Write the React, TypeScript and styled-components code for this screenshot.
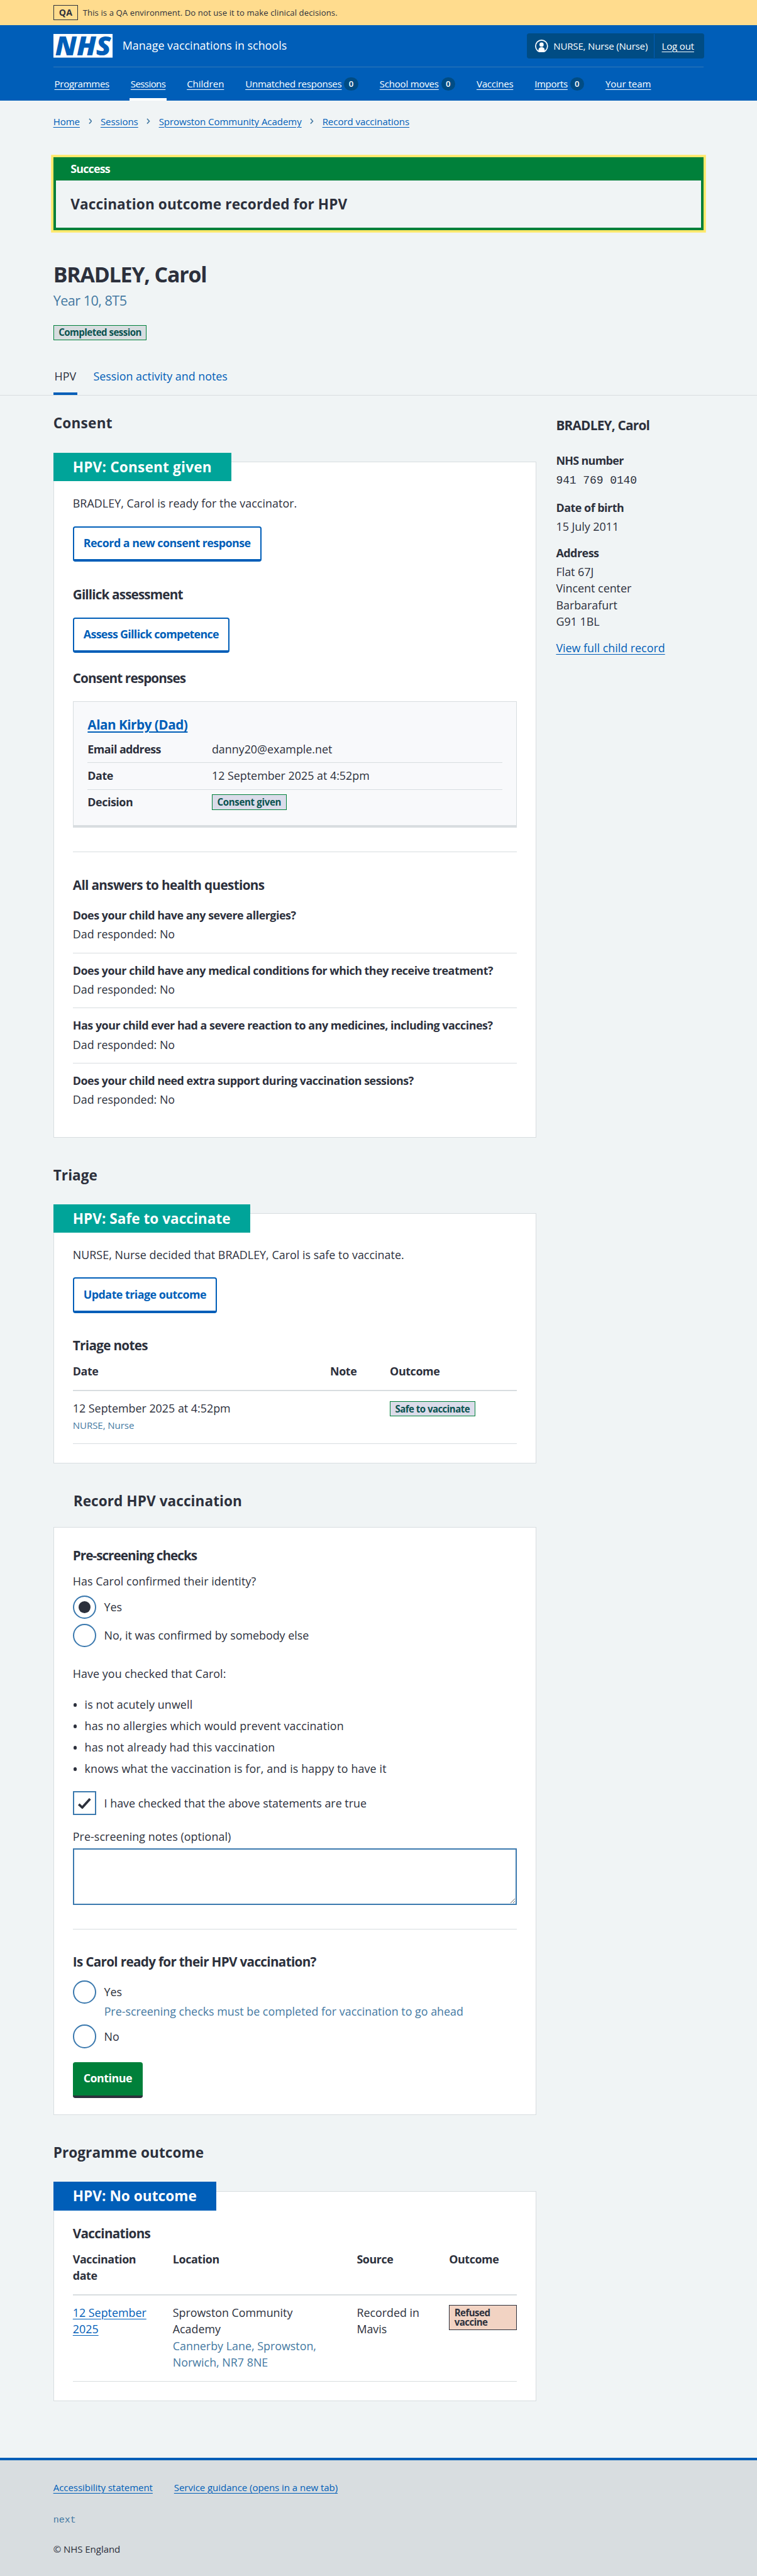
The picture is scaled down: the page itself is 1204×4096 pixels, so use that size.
import type { ReactNode } from "react";
import styled, { createGlobalStyle } from "styled-components";

const c = {
  text: "#2c303c",
  secondary: "#4479a2",
  input: "#3b79ae",
  blue: "#005eb8",
  darkBlue: "#004c84",
  green: "#00803a",
  teal: "#00a499",
  page: "#f0f4f5",
  border: "#d8dde0",
  yellow: "#ffe86b",
};

/* Stroke widths that stay whole device pixels at the page's zoom level */
const stroke = { medium: "2.15px", thick: "4.27px" };

const GlobalStyle = createGlobalStyle`
  *, *::before, *::after { box-sizing: border-box; }
  html { background: ${c.border}; }
  body {
    margin: 0;
    background: ${c.page};
    color: ${c.text};
    font-family: "Open Sans", "Noto Sans", Arial, sans-serif;
    font-size: 19px;
    line-height: 28px;
  }
  h1, h2, h3, h4, p, ul, dl, dd, dt { margin: 0; padding: 0; font-size: inherit; }
`;

const Page = styled.div`
  zoom: 0.9409;
  display: flex;
  flex-direction: column;
  min-height: 4353px;
`;

/* Environment banner */
const EnvBar = styled.div`
  display: flex;
  align-items: center;
  gap: 8px;
  height: 42px;
  padding: 0 90px;
  background: #ffdc8e;
  font-size: 14px;
  line-height: 24px;
  letter-spacing: 0.006em;
`;
const EnvTag = styled.strong`
  width: 42px;
  height: 26px;
  border: 1px solid ${c.text};
  text-align: center;
  font-size: 15px;
`;
const EnvText = styled.span`
  padding-top: 1px;
`;

/* Header */
const Header = styled.header`
  height: 128px;
  padding: 0 90px;
  background: ${c.blue};
  color: #fff;
  font-size: 16px;
  letter-spacing: -0.012em;
`;
const HeaderTop = styled.div`
  display: flex;
  align-items: center;
  height: 72px;
  border-bottom: 1px solid #3379b8;
`;
const Logo = styled.svg`
  display: block;
  width: 100px;
  height: 40px;
  overflow: visible;
`;
const ServiceName = styled.span`
  flex: 1;
  padding: 0 0 2px 17px;
  font-size: 19px;
  letter-spacing: 0.001em;
`;
const Account = styled.div`
  display: flex;
  width: 300px;
  height: 42px;
  margin-right: -1px;
  border-radius: 4px;
  background: ${c.darkBlue};
`;
const AccountItem = styled.div<{ $last?: boolean }>`
  display: flex;
  align-items: center;
  flex: ${(p) => (p.$last ? 1 : "0 0 216px")};
  gap: 9px;
  height: 40px;
  margin: 1px 0;
  padding-left: ${(p) => (p.$last ? 12 : 14)}px;
  border-right: ${(p) => (p.$last ? 0 : 1)}px solid ${c.blue};
  white-space: nowrap;
`;
const Nav = styled.nav`
  display: flex;
  gap: 32px;
  height: 56px;
`;
const NavItem = styled.div<{ $active?: boolean; $ls?: number }>`
  display: flex;
  align-items: center;
  gap: 4px;
  padding: 4px 2px 0;
  border-bottom: ${stroke.thick} solid ${(p) => (p.$active ? "#fff" : "transparent")};
  letter-spacing: ${(p) => p.$ls ?? 0}em;
  white-space: nowrap;
`;
const Badge = styled.span`
  width: 24px;
  height: 22px;
  border-radius: 12px;
  background: ${c.darkBlue};
  font-size: 14px;
  font-weight: 600;
  line-height: 22px;
  text-align: center;
  letter-spacing: 0;
`;

const Link = styled.a<{ $light?: boolean }>`
  color: ${(p) => (p.$light ? "#fff" : c.blue)};
  text-decoration: underline;
  text-decoration-thickness: 1.1px;
  text-underline-offset: 3px;
`;

const Container = styled.div`
  padding: 0 90px;
`;

const Breadcrumb = styled.nav`
  display: flex;
  align-items: center;
  margin-top: 23px;
  gap: 14.5px;
  font-size: 16px;
  line-height: 24px;
  letter-spacing: -0.004em;
`;

/* Success banner */
const Banner = styled.section`
  height: 123px;
  margin-top: 49px;
  border: ${stroke.thick} solid ${c.green};
  border-top: 0;
  box-shadow: 0 0 0 4px ${c.yellow};
`;
const BannerTitle = styled.div`
  height: 39px;
  padding-left: 25px;
  background: ${c.green};
  color: #fff;
  font-weight: 700;
  line-height: 39px;
  letter-spacing: -0.045em;
`;
const BannerText = styled.p`
  padding-left: 25px;
  font-size: 24px;
  font-weight: 700;
  line-height: 80px;
  letter-spacing: 0.005em;
`;

const Title = styled.h1`
  margin-top: 53px;
  font-size: 36px;
  line-height: 44px;
  letter-spacing: -0.034em;
`;
const Caption = styled.p`
  margin: 6px 0 25px;
  color: ${c.secondary};
  font-size: 23px;
  line-height: 32px;
  letter-spacing: -0.025em;
`;

const Tag = styled.strong<{ $bg: string; $fg?: string; $ls?: number }>`
  display: block;
  width: fit-content;
  padding: 4px 8px;
  border: 1px solid ${(p) => p.$fg ?? c.green};
  background: ${(p) => p.$bg};
  color: ${(p) => p.$fg ?? "#0b5250"};
  font-size: 16px;
  line-height: 16px;
  letter-spacing: ${(p) => p.$ls ?? -0.035}em;
`;

const Tabs = styled.div`
  display: flex;
  gap: 25px;
  margin-top: 47px;
  padding: 0 90px;
  border-bottom: 1px solid ${c.border};
`;
const Tab = styled.a<{ $active?: boolean }>`
  padding: 0 2px 13px;
  border-bottom: ${stroke.thick} solid ${(p) => (p.$active ? c.blue : "transparent")};
  color: ${(p) => (p.$active ? c.text : c.blue)};
`;

const Columns = styled.div`
  display: flex;
  gap: 33px;
  padding: 0 90px;
`;
const MainColumn = styled.main`
  width: 817px;
`;
const Aside = styled.aside`
  flex: 1;
  padding-top: 34px;
`;

const SectionTitle = styled.h2<{ $top?: number; $indent?: number; $ls?: number }>`
  margin-top: ${(p) => p.$top ?? 47.7}px;
  padding-left: ${(p) => p.$indent ?? 0}px;
  font-size: 24px;
  line-height: 32px;
  letter-spacing: ${(p) => p.$ls ?? 0.003}em;
`;

const Card = styled.section<{ $top?: number; $bottom?: number }>`
  margin-top: ${(p) => p.$top ?? 48.3}px;
  padding: 0 32px ${(p) => p.$bottom ?? 32}px;
  border: 1px solid ${c.border};
  background: #fff;
`;
const CardLabel = styled.h3<{ $bg: string; $ls?: number }>`
  width: fit-content;
  margin: -16px 0 0 -33px;
  padding: 0 33px;
  background: ${(p) => p.$bg};
  color: #fff;
  font-size: 24px;
  line-height: 48px;
  letter-spacing: ${(p) => p.$ls ?? 0.009}em;
`;
const Subheading = styled.h4<{ $top: number; $ls?: number }>`
  margin-top: ${(p) => p.$top}px;
  font-size: 22px;
  line-height: 32px;
  letter-spacing: ${(p) => p.$ls ?? -0.033}em;
`;
const Text = styled.p<{ $top?: number; $ls?: number }>`
  margin-top: ${(p) => p.$top ?? 0}px;
  letter-spacing: ${(p) => p.$ls ?? 0.001}em;
`;
const Strong = styled.strong<{ $ls?: number }>`
  display: block;
  letter-spacing: ${(p) => p.$ls ?? -0.026}em;
`;

const Button = styled.button<{ $primary?: boolean; $top: number; $ls?: number }>`
  display: block;
  height: 60px;
  margin: ${(p) => p.$top}px 0 0;
  padding: 0 ${(p) => (p.$primary ? 18 : 16)}px 2px;
  border: ${(p) => (p.$primary ? "0" : `${stroke.medium} solid ${c.blue}`)};
  border-bottom: ${stroke.thick} solid ${(p) => (p.$primary ? c.text : c.blue)};
  border-radius: 4px;
  background: ${(p) => (p.$primary ? c.green : "#fff")};
  color: ${(p) => (p.$primary ? "#fff" : c.blue)};
  font: 700 19px/28px "Open Sans", sans-serif;
  letter-spacing: ${(p) => p.$ls ?? -0.029}em;
`;

const Rule = styled.hr`
  height: 1px;
  margin: 40px 0 0;
  border: 0;
  background: ${c.border};
`;

/* Consent response card */
const ResponseCard = styled.div`
  margin-top: 23px;
  padding: 22.5px 24px 25px;
  border: 1px solid ${c.border};
  border-bottom-width: ${stroke.thick};
  background: #f8f9fb;
`;
const ResponseName = styled.h5`
  margin: 0 0 4px;
  font-size: 22px;
  line-height: 32px;
  letter-spacing: -0.023em;
  a { text-decoration-thickness: ${stroke.medium}; }
`;
const SummaryRow = styled.div`
  display: grid;
  grid-template-columns: 210px 1fr;
  align-items: center;
  padding: 7px 0 9px;
  border-bottom: 1px solid ${c.border};
  &:last-child { border: 0; padding-bottom: 0; height: 35px; }
`;

const Answers = styled.div`
  margin-top: 7px;
`;
const Answer = styled.div`
  display: grid;
  gap: 4px;
  padding: 15px 0 17px;
  border-bottom: 1px solid ${c.border};
  &:last-child { border: 0; padding-bottom: 0; }
`;

/* Tables */
const TableRow = styled.div<{ $cols: string; $head?: boolean }>`
  display: grid;
  grid-template-columns: ${(p) => p.$cols};
  align-items: start;
  margin-top: ${(p) => (p.$head ? 14 : 0)}px;
  padding: ${(p) => (p.$head ? "0 0 17.4px" : "14.6px 0 18px")};
  border-bottom: ${(p) => (p.$head ? stroke.medium : "1px")} solid ${c.border};
  font-weight: ${(p) => (p.$head ? 700 : 400)};
  letter-spacing: ${(p) => (p.$head ? -0.022 : 0)}em;
`;
const Cell = styled.div<{ $top?: number; $max?: number }>`
  max-width: ${(p) => (p.$max ? `${p.$max}px` : "none")};
  padding-top: ${(p) => p.$top ?? 0}px;
`;
const Secondary = styled.span`
  color: ${c.secondary};
`;
const SmallSecondary = styled.div`
  margin-top: 3px;
  color: ${c.secondary};
  font-size: 16px;
  line-height: 24px;
  letter-spacing: -0.004em;
`;

/* Form controls */
const Choice = styled.label<{ $top?: number }>`
  display: flex;
  align-items: center;
  gap: 13px;
  height: 40px;
  margin-top: ${(p) => p.$top ?? 8}px;
`;
const Radio = styled.span<{ $checked?: boolean }>`
  display: grid;
  place-items: center;
  width: 40px;
  height: 40px;
  border: ${stroke.medium} solid ${c.input};
  border-radius: 50%;
  &::after {
    content: "";
    width: 20px;
    height: 20px;
    border-radius: 50%;
    background: ${(p) => (p.$checked ? c.text : "transparent")};
  }
`;
const Checkbox = styled.span`
  display: grid;
  place-items: center;
  width: 40px;
  height: 40px;
  border: ${stroke.medium} solid ${c.input};
`;
const Hint = styled.p`
  margin: -1px 0 0;
  padding-left: 53px;
  color: ${c.secondary};
`;
const TextArea = styled.textarea`
  display: block;
  width: 100%;
  height: 96px;
  margin-top: 5.7px;
  border: ${stroke.medium} solid ${c.input};
  border-radius: 0;
  background: #fff;
`;
const Bullets = styled.ul`
  display: grid;
  gap: 8px;
  margin-top: 24px;
  list-style: none;
`;
const Bullet = styled.li`
  display: flex;
  align-items: center;
  gap: 13px;
  padding-left: 1px;
  letter-spacing: 0.007em;
  &::before {
    content: "";
    width: 6px;
    height: 6px;
    margin-top: 2px;
    border-radius: 50%;
    background: ${c.text};
  }
`;

/* Child summary */
const Detail = styled.div<{ $top?: number }>`
  margin-top: ${(p) => p.$top ?? 16.5}px;
`;
const DetailValue = styled.div`
  margin-top: 4px;
`;
const Mono = styled.div`
  margin-top: 6px;
  padding-bottom: 1px;
  font-family: "Liberation Mono", monospace;
`;

/* Footer */
const Footer = styled.footer`
  flex: 1;
  margin-top: 95px;
  padding: 34px 90px 0;
  border-top: ${stroke.thick} solid ${c.blue};
  background: ${c.border};
  font-size: 16px;
  line-height: 24px;
  letter-spacing: -0.004em;
`;
const FooterLinks = styled.div`
  display: flex;
  gap: 36px;
`;
const Version = styled.div`
  margin-top: 32px;
  color: ${c.secondary};
  font-family: "Liberation Mono", monospace;
  letter-spacing: 0;
`;
const Copyright = styled.p`
  margin-top: 25px;
`;

const NhsLogo = () => (
  <Logo viewBox="0 0 100 40" role="img" aria-label="NHS">
    <rect width="100" height="40" fill="#fff" />
    <text
      x="3"
      y="36"
      textLength="94"
      lengthAdjust="spacingAndGlyphs"
      fill={c.blue}
      fontFamily="Open Sans, sans-serif"
      fontWeight="800"
      fontStyle="italic"
      fontSize="45.5"
    >
      NHS
    </text>
  </Logo>
);

const UserIcon = () => (
  <svg width="22" height="22" viewBox="0 0 22 22">
    <circle cx="11" cy="11" r="10.1" fill="none" stroke="#fff" strokeWidth="1.8" />
    <circle cx="11" cy="8.4" r="3.6" fill="#fff" />
    <path d="M5.8 19.5v-2.3c0-2.6 2-4.4 5.2-4.4s5.2 1.8 5.2 4.4v2.3L11 21.5z" fill="#fff" />
  </svg>
);

const Chevron = () => (
  <svg width="6" height="10" viewBox="0 0 6 10">
    <path d="M1 0.8l3.8 4.2L1 9.2" fill="none" stroke={c.secondary} strokeWidth="1.7" />
  </svg>
);

const Tick = () => (
  <svg width="22" height="18" viewBox="0 0 22 18">
    <path d="M1.3 10.5l6 5.5L20.5 1.4" fill="none" stroke={c.text} strokeWidth="4" />
  </svg>
);

const navItems: { label: string; count?: number; active?: boolean; ls: number }[] = [
  { label: "Programmes", ls: -0.02 },
  { label: "Sessions", active: true, ls: -0.04 },
  { label: "Children", ls: -0.001 },
  { label: "Unmatched responses", count: 0, ls: -0.016 },
  { label: "School moves", count: 0, ls: -0.014 },
  { label: "Vaccines", ls: -0.017 },
  { label: "Imports", count: 0, ls: -0.023 },
  { label: "Your team", ls: -0.003 },
];

const crumbs = ["Home", "Sessions", "Sprowston Community Academy", "Record vaccinations"];

const questions = [
  "Does your child have any severe allergies?",
  "Does your child have any medical conditions for which they receive treatment?",
  "Has your child ever had a severe reaction to any medicines, including vaccines?",
  "Does your child need extra support during vaccination sessions?",
];

const statements = [
  "is not acutely unwell",
  "has no allergies which would prevent vaccination",
  "has not already had this vaccination",
  "knows what the vaccination is for, and is happy to have it",
];

const RadioOption = ({ children, checked, top }: { children: ReactNode; checked?: boolean; top?: number }) => (
  <Choice $top={top}>
    <Radio $checked={checked} />
    {children}
  </Choice>
);

const triageCols = "435px 101px 1fr";
const outcomeCols = "169px 311px 156px 115px";

export default function App() {
  return (
    <>
      <GlobalStyle />
      <Page>
        <EnvBar>
          <EnvTag>QA</EnvTag>
          <EnvText>This is a QA environment. Do not use it to make clinical decisions.</EnvText>
        </EnvBar>

        <Header>
          <HeaderTop>
            <NhsLogo />
            <ServiceName>Manage vaccinations in schools</ServiceName>
            <Account>
              <AccountItem>
                <UserIcon />
                NURSE, Nurse (Nurse)
              </AccountItem>
              <AccountItem $last>
                <Link $light>Log out</Link>
              </AccountItem>
            </Account>
          </HeaderTop>
          <Nav>
            {navItems.map((n) => (
              <NavItem key={n.label} $active={n.active} $ls={n.ls}>
                <Link $light>{n.label}</Link>
                {n.count !== undefined && <Badge>{n.count}</Badge>}
              </NavItem>
            ))}
          </Nav>
        </Header>

        <Container>
          <Breadcrumb>
            {crumbs.map((label, i) => [
              i > 0 && <Chevron key={`${label}-sep`} />,
              <Link key={label}>{label}</Link>,
            ])}
          </Breadcrumb>

          <Banner>
            <BannerTitle>Success</BannerTitle>
            <BannerText>Vaccination outcome recorded for HPV</BannerText>
          </Banner>

          <Title>BRADLEY, Carol</Title>
          <Caption>Year 10, 8T5</Caption>
          <Tag $bg={c.border}>Completed session</Tag>
        </Container>

        <Tabs>
          <Tab $active>HPV</Tab>
          <Tab>Session activity and notes</Tab>
        </Tabs>

        <Columns>
          <MainColumn>
            <SectionTitle $top={31.5} $ls={0.011}>Consent</SectionTitle>
            <Card $bottom={49.5}>
              <CardLabel $bg={c.teal}>HPV: Consent given</CardLabel>
              <Text $top={23} $ls={0.003}>BRADLEY, Carol is ready for the vaccinator.</Text>
              <Button $top={25}>Record a new consent response</Button>
              <Subheading $top={39} $ls={-0.041}>Gillick assessment</Subheading>
              <Button $top={23} $ls={-0.038}>Assess Gillick competence</Button>
              <Subheading $top={27} $ls={-0.042}>Consent responses</Subheading>

              <ResponseCard>
                <ResponseName>
                  <Link>Alan Kirby (Dad)</Link>
                </ResponseName>
                <SummaryRow>
                  <Strong $ls={-0.031}>Email address</Strong>
                  <span>danny20@example.net</span>
                </SummaryRow>
                <SummaryRow>
                  <Strong>Date</Strong>
                  <span>12 September 2025 at 4:52pm</span>
                </SummaryRow>
                <SummaryRow>
                  <Strong>Decision</Strong>
                  <Tag $bg="#dbdcea" $ls={-0.022}>Consent given</Tag>
                </SummaryRow>
              </ResponseCard>

              <Rule />
              <Subheading $top={39} $ls={-0.031}>All answers to health questions</Subheading>
              <Answers>
                {questions.map((q) => (
                  <Answer key={q}>
                    <Strong>{q}</Strong>
                    <span>Dad responded: No</span>
                  </Answer>
                ))}
              </Answers>
            </Card>

            <SectionTitle>Triage</SectionTitle>
            <Card>
              <CardLabel $bg={c.teal} $ls={0.001}>HPV: Safe to vaccinate</CardLabel>
              <Text $top={22.5} $ls={0.002}>NURSE, Nurse decided that BRADLEY, Carol is safe to vaccinate.</Text>
              <Button $top={25}>Update triage outcome</Button>
              <Subheading $top={38.5}>Triage notes</Subheading>
              <TableRow $cols={triageCols} $head>
                <Cell>Date</Cell>
                <Cell>Note</Cell>
                <Cell>Outcome</Cell>
              </TableRow>
              <TableRow $cols={triageCols}>
                <Cell>
                  12 September 2025 at 4:52pm
                  <SmallSecondary>NURSE, Nurse</SmallSecondary>
                </Cell>
                <Cell />
                <Cell $top={2}>
                  <Tag $bg="#dbdcea" $ls={-0.037}>Safe to vaccinate</Tag>
                </Cell>
              </TableRow>
            </Card>

            <SectionTitle $indent={34}>Record HPV vaccination</SectionTitle>
            <Card $top={28.5} $bottom={28}>
              <Subheading $top={30.5} $ls={-0.047}>Pre-screening checks</Subheading>
              <Text $top={14} $ls={0.004}>Has Carol confirmed their identity?</Text>
              <RadioOption checked top={9.4}>Yes</RadioOption>
              <RadioOption>No, it was confirmed by somebody else</RadioOption>
              <Text $top={30.6} $ls={0.004}>Have you checked that Carol:</Text>
              <Bullets>
                {statements.map((s) => (
                  <Bullet key={s}>{s}</Bullet>
                ))}
              </Bullets>
              <Choice $top={25}>
                <Checkbox>
                  <Tick />
                </Checkbox>
                I have checked that the above statements are true
              </Choice>
              <Text $top={22.3} $ls={0.004}>Pre-screening notes (optional)</Text>
              <TextArea />
              <Rule />
              <Subheading $top={39}>Is Carol ready for their HPV vaccination?</Subheading>
              <RadioOption top={15}>Yes</RadioOption>
              <Hint>Pre-screening checks must be completed for vaccination to go ahead</Hint>
              <RadioOption>No</RadioOption>
              <Button $primary $top={24}>Continue</Button>
            </Card>

            <SectionTitle>Programme outcome</SectionTitle>
            <Card>
              <CardLabel $bg={c.blue} $ls={0.002}>HPV: No outcome</CardLabel>
              <Subheading $top={22.5}>Vaccinations</Subheading>
              <TableRow $cols={outcomeCols} $head>
                <Cell $max={130}>Vaccination date</Cell>
                <Cell>Location</Cell>
                <Cell>Source</Cell>
                <Cell>Outcome</Cell>
              </TableRow>
              <TableRow $cols={outcomeCols}>
                <Cell $max={140}>
                  <Link>12 September 2025</Link>
                </Cell>
                <Cell $max={270}>
                  Sprowston Community Academy
                  <br />
                  <Secondary>Cannerby Lane, Sprowston, Norwich, NR7 8NE</Secondary>
                </Cell>
                <Cell $max={125}>Recorded in Mavis</Cell>
                <Cell $top={1.5}>
                  <Tag $bg="#f2d3c3" $fg={c.text}>Refused vaccine</Tag>
                </Cell>
              </TableRow>
            </Card>
          </MainColumn>

          <Aside>
            <Subheading $top={0} $ls={-0.035}>BRADLEY, Carol</Subheading>
            <Detail $top={30}>
              <Strong $ls={-0.036}>NHS number</Strong>
              <Mono>941 769 0140</Mono>
            </Detail>
            <Detail>
              <Strong>Date of birth</Strong>
              <DetailValue>15 July 2011</DetailValue>
            </Detail>
            <Detail>
              <Strong>Address</Strong>
              <DetailValue>
                Flat 67J
                <br />
                Vincent center
                <br />
                Barbarafurt
                <br />
                G91 1BL
              </DetailValue>
            </Detail>
            <Detail>
              <Link>View full child record</Link>
            </Detail>
          </Aside>
        </Columns>

        <Footer>
          <FooterLinks>
            <Link>Accessibility statement</Link>
            <Link>Service guidance (opens in a new tab)</Link>
          </FooterLinks>
          <Version>next</Version>
          <Copyright>© NHS England</Copyright>
        </Footer>
      </Page>
    </>
  );
}
